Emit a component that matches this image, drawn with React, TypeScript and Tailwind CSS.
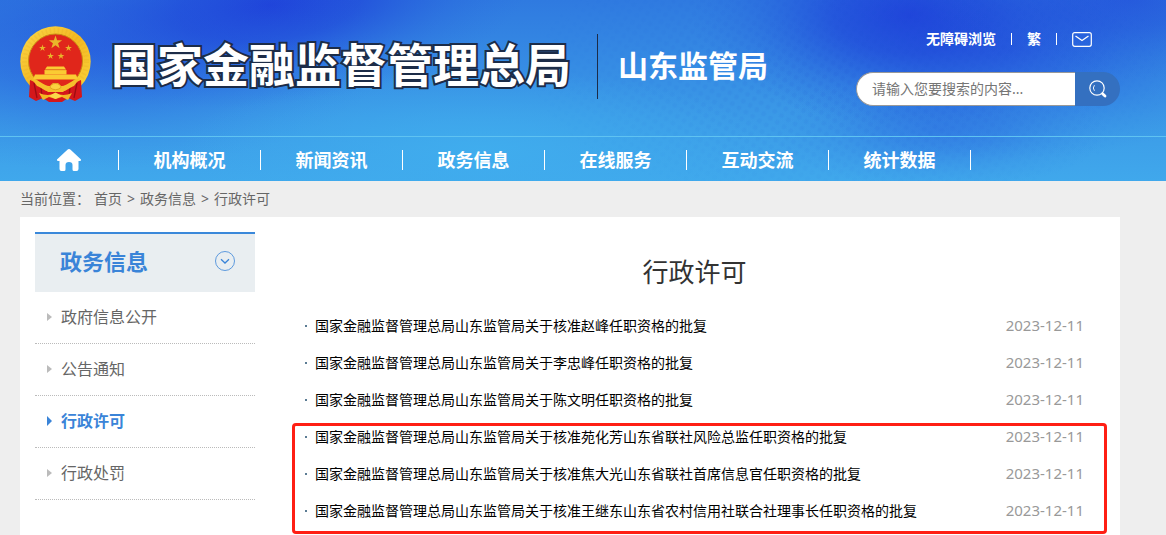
import { useState } from "react";

const NAV = ["机构概况", "新闻资讯", "政务信息", "在线服务", "互动交流", "统计数据"];

const SIDE_MENU = ["政府信息公开", "公告通知", "行政许可", "行政处罚"];

const CRUMBS = ["首页", "政务信息", "行政许可"];

type Article = { title: string; date: string };

const ARTICLES: Article[] = [
  { title: "国家金融监督管理总局山东监管局关于核准赵峰任职资格的批复", date: "2023-12-11" },
  { title: "国家金融监督管理总局山东监管局关于李忠峰任职资格的批复", date: "2023-12-11" },
  { title: "国家金融监督管理总局山东监管局关于陈文明任职资格的批复", date: "2023-12-11" },
];

const MARKED: Article[] = [
  { title: "国家金融监督管理总局山东监管局关于核准苑化芳山东省联社风险总监任职资格的批复", date: "2023-12-11" },
  { title: "国家金融监督管理总局山东监管局关于核准焦大光山东省联社首席信息官任职资格的批复", date: "2023-12-11" },
  { title: "国家金融监督管理总局山东监管局关于核准王继东山东省农村信用社联合社理事长任职资格的批复", date: "2023-12-11" },
];

// blue banner artwork with the faint halftone
function HeaderArt() {
  return (
    <svg
      className="absolute inset-0 h-full w-full"
      viewBox="0 0 1166 181"
      preserveAspectRatio="none"
      aria-hidden="true"
    >
      <defs>
        <linearGradient id="base" x1="0" y1="0" x2="0" y2="1">
          <stop offset="0" stopColor="#2f7ae0" />
          <stop offset="0.65" stopColor="#3b9ae7" />
          <stop offset="1" stopColor="#40a8ec" />
        </linearGradient>
        <radialGradient id="deep">
          <stop offset="0" stopColor="#1f42da" />
          <stop offset="0.35" stopColor="#2049da" stopOpacity="0.75" />
          <stop offset="0.7" stopColor="#2458dc" stopOpacity="0.28" />
          <stop offset="1" stopColor="#2a6be0" stopOpacity="0" />
        </radialGradient>
        <radialGradient id="light">
          <stop offset="0" stopColor="#40aeee" stopOpacity="0.9" />
          <stop offset="1" stopColor="#40aeee" stopOpacity="0" />
        </radialGradient>
        <pattern id="dots" width="8" height="8" patternUnits="userSpaceOnUse" patternTransform="rotate(32)">
          <circle cx="4" cy="4" r="2.4" fill="#1c50d0" />
        </pattern>
        <radialGradient id="fade">
          <stop offset="0" stopColor="#fff" />
          <stop offset="1" stopColor="#fff" stopOpacity="0" />
        </radialGradient>
        <mask id="dotMask">
          <ellipse cx="850" cy="70" rx="330" ry="140" fill="url(#fade)" />
        </mask>
      </defs>
      <rect width="1166" height="181" fill="url(#base)" />
      <ellipse cx="270" cy="5" rx="260" ry="100" fill="url(#deep)" transform="rotate(-6 270 5)" />
      <ellipse cx="90" cy="50" rx="300" ry="120" fill="url(#deep)" opacity="0.45" />
      <ellipse cx="910" cy="15" rx="220" ry="110" fill="url(#deep)" />
      <ellipse cx="1010" cy="50" rx="260" ry="110" fill="url(#deep)" opacity="0.5" />
      <ellipse cx="1130" cy="0" rx="200" ry="80" fill="url(#deep)" opacity="0.5" />
      <ellipse cx="940" cy="130" rx="170" ry="60" fill="url(#deep)" opacity="0.3" />
      <ellipse cx="480" cy="150" rx="300" ry="80" fill="url(#light)" />
      <rect width="1166" height="181" fill="url(#dots)" mask="url(#dotMask)" opacity="0.1" />
    </svg>
  );
}

const STAR = "M0-1 .23-.31.95-.31.37.12.59.81 0 .38-.59.81-.37.12-.95-.31-.23-.31Z";

function Emblem() {
  return (
    <svg className="h-[76px] w-[71px] shrink-0" viewBox="0 0 71 76" role="img" aria-label="国徽">
      <defs>
        <linearGradient id="gold" x1="0" y1="0" x2="1" y2="1">
          <stop offset="0" stopColor="#fbd84a" />
          <stop offset="0.5" stopColor="#f3b922" />
          <stop offset="1" stopColor="#fbd63c" />
        </linearGradient>
      </defs>
      <circle cx="35.500" cy="35.500" r="35.200" fill="url(#gold)" />
      <circle cx="35.500" cy="35.500" r="31" fill="none" stroke="#e0a01c" strokeWidth="5" strokeDasharray="1.500 2.500" opacity="0.2" />
      <circle cx="35.500" cy="35" r="27" fill="#e0261b" stroke="#c98a14" strokeWidth="1" />
      <g fill="#e9b52a">
        <path d={STAR} transform="translate(35.500 16.500) scale(7)" />
        <path d={STAR} transform="translate(22.500 22) scale(3.600)" />
        <path d={STAR} transform="translate(48.500 22) scale(3.600)" />
        <path d={STAR} transform="translate(30.500 30) scale(3.600)" />
        <path d={STAR} transform="translate(41 30) scale(3.600)" />
      </g>
      <g fill="#fbcb33">
        <path d="M27 40.500h17l2 3H25Z" />
        <path d="M24.500 44h22v4.500h-22Z" />
        <path d="M15 48.500h41l2 5h-45Z" />
      </g>
      <path d="M25 43.800h21" stroke="#e08a1c" strokeWidth="0.700" />
      <path d="M10 54C18 57 24 61 28 66l15 0C47 61 53 57 61 54L62 71 55 75 48 72 42 76H29L23 72 16 75 9 71Z" fill="#d4171b" />
      <path d="M14 57l3 15M57 57l-3 15M21 61l1 10M50 61l-1 10" stroke="#9d0d12" strokeWidth="1.300" fill="none" />
      <path d="M11 52C20 54 25 61 30 60L33 57H38L41 60C46 61 51 54 60 52L54 60C49 62 45 66 40 66H31C26 66 22 62 17 60Z" fill="#f5c02c" />
      <path d="M30 61.500a5.500 4 0 0 1 11 0Q35.500 66 30 61.500Z" fill="#fbd240" stroke="#d79314" strokeWidth="0.700" />
      <path d="M19 67Q28 71 35.500 67Q43 71 52 67L48 74 42 71 35.500 73 29 71 23 74Z" fill="#f3b824" />
      <path d="M29 70l6.500-3.500 6.500 3.500-6.500 3Z" fill="#fbd84a" />
    </svg>
  );
}

function HomeIcon() {
  return (
    <svg className="h-6 w-[26px]" viewBox="0 0 26 24" fill="#fff" aria-hidden="true">
      <path d="M13 1Q13.800 1 14.600 1.700L25 11.600Q25.600 13 24 13H22.500V21Q22.500 23 20.500 23H18Q16.500 23 16.500 21.500V17Q16.500 14 13 14T9.500 17V21.500Q9.500 23 8 23H5.500Q3.500 23 3.500 21V13H2Q.400 13 1 11.600L11.400 1.700Q12.200 1 13 1Z" />
    </svg>
  );
}

function MailIcon() {
  return (
    <svg className="h-[15px] w-5" viewBox="0 0 20 15" fill="none" stroke="#fff" aria-hidden="true">
      <rect x="0.700" y="0.700" width="18.600" height="13.600" rx="2" strokeWidth="1.200" />
      <path d="M3.500 4 10 8.500 16.500 4" strokeWidth="1.300" />
    </svg>
  );
}

function SearchIcon() {
  return (
    <svg className="h-[18px] w-[18px]" viewBox="0 0 18 18" fill="none" stroke="#fff" strokeLinecap="round" aria-hidden="true">
      <circle cx="8" cy="8" r="7.200" strokeWidth="1.200" />
      <path d="M5.200 10.500A4 4 0 0 1 5.200 5.500" strokeWidth="0.900" />
      <path d="M13.600 13.800 16 16" strokeWidth="2.800" />
    </svg>
  );
}

function ArticleRow({ title, date }: Article) {
  return (
    <li className="flex h-[37px] items-center">
      <span className="mr-2 size-0.5 bg-[#5b7c94]" />
      <a href="#" className="text-sm text-black">
        {title}
      </a>
      <time className="ml-auto text-[15px] text-[#999]">{date}</time>
    </li>
  );
}

export default function App() {
  const [keyword, setKeyword] = useState("");

  return (
    <div
      lang="zh-CN"
      className="flex min-h-screen flex-col bg-[#eee] font-['Noto_Sans','Noto_Sans_CJK_SC',sans-serif] text-[#666]"
    >
      <header className="relative text-white">
        <HeaderArt />

        <div className="relative flex h-[136px] justify-between pr-[46px] pl-5">
          <div className="flex items-center gap-5 pb-2">
            <Emblem />
            <h1 className="text-[46px] leading-none font-bold whitespace-nowrap [-webkit-text-stroke:4px_#1c2c48] [paint-order:stroke_fill]">
              国家金融监督管理总局
            </h1>
            <div className="mt-1 ml-1.5 h-[65px] w-px bg-[#1c2c48]" />
            <p className="mt-1 text-3xl leading-none font-bold whitespace-nowrap">山东监管局</p>
          </div>

          <div className="flex flex-col items-end pt-8">
            <div className="flex h-[14px] items-center gap-[15px] pr-7 text-sm font-bold">
              <a href="#">无障碍浏览</a>
              <span className="h-3 w-px bg-white" />
              <a href="#">繁</a>
              <span className="h-3 w-px bg-white" />
              <a href="#" aria-label="邮箱">
                <MailIcon />
              </a>
            </div>
            <form className="mt-[26px] flex h-[34px]" onSubmit={(e) => e.preventDefault()}>
              <input
                type="text"
                aria-label="搜索"
                value={keyword}
                onChange={(e) => setKeyword(e.target.value)}
                placeholder="请输入您要搜索的内容..."
                className="w-[219px] rounded-l-full border border-r-0 border-[#999] bg-white pl-[15px] text-sm text-[#333] outline-none placeholder:text-[#757575]"
              />
              <button
                type="submit"
                aria-label="搜索"
                className="flex w-[45px] items-center justify-center rounded-r-full bg-[#3470c0]"
              >
                <SearchIcon />
              </button>
            </form>
          </div>
        </div>

        <nav className="relative flex h-[45px] items-center border-t border-[#5fc3f2] pt-0.5 pl-5 text-lg leading-5 font-bold">
          <a href="#" aria-label="首页" className="flex h-5 w-[99px] items-center justify-center border-r border-white">
            <HomeIcon />
          </a>
          {NAV.map((item) => (
            <a key={item} href="#" className="h-5 w-[142px] border-r border-white text-center">
              {item}
            </a>
          ))}
        </nav>
      </header>

      <div className="flex h-9 items-center pl-5 text-sm">
        <span className="mr-1">当前位置：</span>
        {CRUMBS.map((c, i) => (
          <span key={c}>
            {i > 0 && <span className="mx-[5px]">&gt;</span>}
            <a href="#">{c}</a>
          </span>
        ))}
      </div>

      <div className="mr-[46px] ml-5 flex flex-1 bg-white pr-9 pl-[15px]">
        <aside className="w-[220px] shrink-0 pt-[15px]">
          <div className="flex h-[60px] items-center justify-between border-t-2 border-[#3a88da] bg-[#e9eef1] pr-5 pb-1 pl-[25px]">
            <h2 className="text-[22px] font-bold text-[#3a84d8]">政务信息</h2>
            <svg className="size-5" viewBox="0 0 20 20" fill="none" stroke="#3a84d8" aria-hidden="true">
              <circle cx="10" cy="10" r="9.500" strokeWidth="0.800" />
              <path d="M6 8.300 10 12 14 8.300" strokeWidth="1.300" />
            </svg>
          </div>
          <ul>
            {SIDE_MENU.map((item) => {
              const active = item === "行政许可";
              return (
                <li key={item} className="border-b border-dotted border-[#bbb]">
                  <a
                    href="#"
                    className={
                      active
                        ? "flex h-[51px] items-center pb-0.5 pl-3 font-bold text-[#3a84d8]"
                        : "flex h-[51px] items-center pb-0.5 pl-3"
                    }
                  >
                    <svg
                      className={active ? "mr-[9px] h-2.5 w-[5px] text-[#3a84d8]" : "mr-[9px] h-2 w-[5px] text-[#bbb]"}
                      viewBox="0 0 5 10"
                      preserveAspectRatio="none"
                      aria-hidden="true"
                    >
                      <path d="M0 0 5 5 0 10Z" fill="currentColor" />
                    </svg>
                    {item}
                  </a>
                </li>
              );
            })}
          </ul>
        </aside>

        <main className="ml-[50px] flex-1 pt-9">
          <h2 className="mb-[15px] text-center text-[26px] leading-[39px] text-[#333]">行政许可</h2>
          <ul>
            {ARTICLES.map((a) => (
              <ArticleRow key={a.title} {...a} />
            ))}
          </ul>
          <div className="relative">
            <ul>
              {MARKED.map((a) => (
                <ArticleRow key={a.title} {...a} />
              ))}
            </ul>
            <div className="pointer-events-none absolute -inset-x-[13px] top-[5px] -bottom-[5px] -mr-2.5 rounded border-3 border-[#ff1f14]" />
          </div>
        </main>
      </div>
    </div>
  );
}
